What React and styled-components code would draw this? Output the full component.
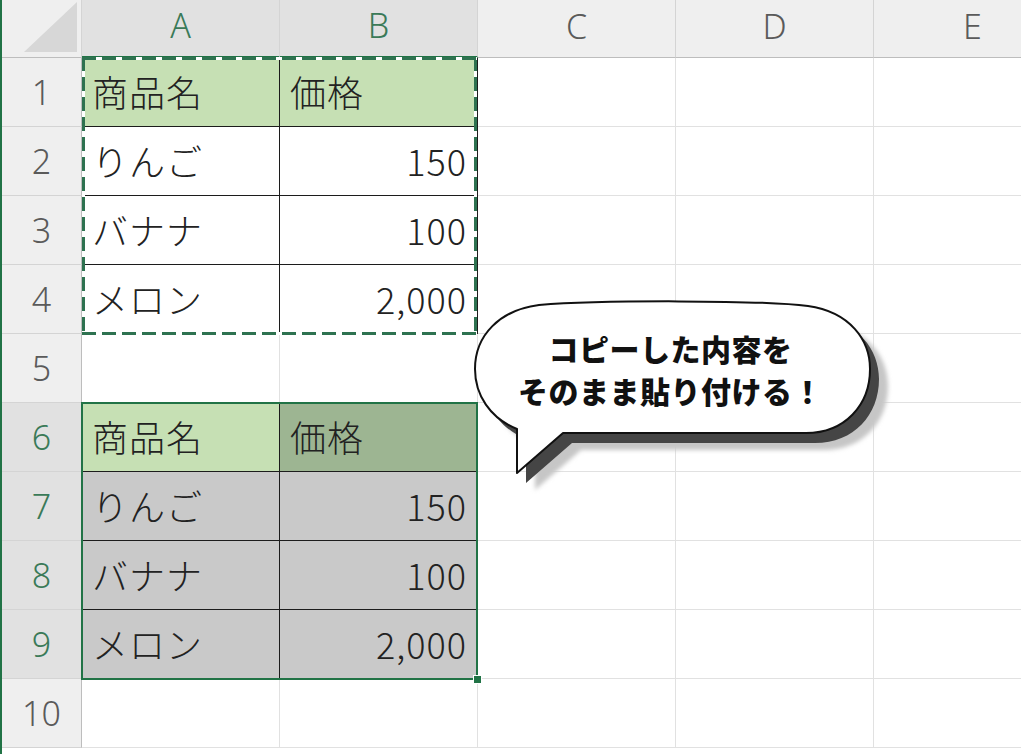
import React from 'react';
import styled, { createGlobalStyle } from 'styled-components';

const GREEN = '#217346';
const COL_W = 198;
const ROW_H = 69;

const GlobalStyle = createGlobalStyle`
  html, body {
    margin: 0;
    padding: 0;
    background: #fff;
    overflow: hidden;
  }
  body {
    font-family: "Noto Sans CJK JP", "Noto Sans", sans-serif;
  }
`;

const COLS = ['A', 'B', 'C', 'D', 'E'];
const ROWS = [1, 2, 3, 4, 5, 6, 7, 8, 9, 10];

const tables = [
  {
    start: 1,
    fills: [
      ['#c6e0b4', '#c6e0b4'],
      ['#fff', '#fff'],
      ['#fff', '#fff'],
      ['#fff', '#fff'],
    ],
  },
  {
    start: 6,
    fills: [
      ['#c6e0b4', '#9db592'],
      ['#c9c9c9', '#c9c9c9'],
      ['#c9c9c9', '#c9c9c9'],
      ['#c9c9c9', '#c9c9c9'],
    ],
  },
];

const rowsText = [
  ['商品名', '価格'],
  ['りんご', '150'],
  ['バナナ', '100'],
  ['メロン', '2,000'],
];

// build lookup of table cells: "row-col" -> cell
const cellMap = {};
tables.forEach(({ start, fills }) => {
  rowsText.forEach((pair, i) => {
    pair.forEach((text, c) => {
      cellMap[`${start + i}-${c}`] = {
        text,
        bg: fills[i][c],
        right: i > 0 && c === 1,
      };
    });
  });
});

const selectedRows = [6, 7, 8, 9];

const Sheet = styled.div`
  position: relative;
  box-sizing: border-box;
  width: 100vw;
  height: 100vh;
  overflow: hidden;
  display: grid;
  grid-template-columns: 80px repeat(5, ${COL_W}px);
  grid-template-rows: 58px repeat(10, ${ROW_H}px) 1fr;
  border-left: 2px solid ${GREEN};
`;

const Corner = styled.div`
  grid-row: 1;
  grid-column: 1;
  display: flex;
  justify-content: flex-end;
  align-items: flex-end;
  padding: 0 4px 5px 0;
  background: #efefef;
  border-right: 1px solid #d4d4d4;
  border-bottom: 1px solid #bdbdbd;
`;

const Triangle = styled.div`
  width: 53px;
  height: 50px;
  background: #d7d7d7;
  clip-path: polygon(100% 0, 100% 100%, 0 100%);
`;

const ColHeader = styled.div`
  grid-row: 1;
  grid-column: ${(p) => p.$col};
  display: flex;
  justify-content: center;
  align-items: center;
  padding-bottom: 6px;
  font-family: "Noto Sans", sans-serif;
  font-weight: 300;
  font-size: 34px;
  color: ${(p) => (p.$sel ? '#3a7a58' : '#5a5a5a')};
  background: ${(p) => (p.$sel ? '#e1e1e1' : '#efefef')};
  border-right: 1px solid #d4d4d4;
  border-bottom: ${(p) => (p.$sel ? `2px solid ${GREEN}` : '1px solid #bdbdbd')};
`;

const RowHeader = styled.div`
  grid-row: ${(p) => p.$row};
  grid-column: 1;
  display: flex;
  justify-content: center;
  align-items: center;
  font-family: "Noto Sans", sans-serif;
  font-weight: 300;
  font-size: 34px;
  color: ${(p) => (p.$sel ? '#3a7a58' : '#5a5a5a')};
  background: ${(p) => (p.$sel ? '#e1e1e1' : '#efefef')};
  border-bottom: 1px solid #d4d4d4;
  border-right: 1px solid #bdbdbd;
`;

const Cell = styled.div`
  grid-row: ${(p) => p.$row};
  grid-column: ${(p) => p.$col};
  display: flex;
  align-items: center;
  justify-content: ${(p) => (p.$right ? 'flex-end' : 'flex-start')};
  padding: 0 10px 3px 10px;
  font-size: 36px;
  font-weight: 300;
  letter-spacing: 1px;
  color: #222;
  background: ${(p) => p.$bg || '#fff'};
  border-right: 1px solid ${(p) => (p.$boxed ? '#1c1c1c' : '#e1e1e1')};
  border-bottom: 1px solid ${(p) => (p.$boxed ? '#1c1c1c' : '#e1e1e1')};
  white-space: nowrap;
  overflow: hidden;
`;

const dash = (dir) =>
  `repeating-linear-gradient(${dir}, #2e7250 0 14px, #fff 14px 20px)`;

const Marquee = styled.div`
  grid-row: 2 / 6;
  grid-column: 2 / 4;
  margin: -1px 1px -1px 0;
  z-index: 2;
  pointer-events: none;
  background:
    ${dash('90deg')} top / 100% 3px no-repeat,
    ${dash('90deg')} bottom / 100% 3px no-repeat,
    ${dash('180deg')} left / 3px 100% no-repeat,
    ${dash('180deg')} right / 3px 100% no-repeat;
`;

const Selection = styled.div`
  grid-row: 7 / 11;
  grid-column: 2 / 4;
  position: relative;
  margin: -1px 0 -1px -1px;
  z-index: 2;
  pointer-events: none;
  border: 2px solid ${GREEN};
`;

const FillHandle = styled.div`
  position: absolute;
  right: -6px;
  bottom: -6px;
  width: 7px;
  height: 7px;
  background: ${GREEN};
  border: 1px solid #fff;
`;

const BubbleArt = styled.svg`
  position: absolute;
  left: 458px;
  top: 290px;
  z-index: 3;
  overflow: visible;
`;

const Caption = styled.div`
  position: absolute;
  left: 471px;
  top: 305px;
  width: 395px;
  height: 128px;
  z-index: 4;
  display: flex;
  flex-direction: column;
  justify-content: center;
  align-items: center;
  font-family: "Noto Sans CJK JP", sans-serif;
  font-weight: 900;
  font-size: 30px;
  line-height: 42px;
  color: #111;
  letter-spacing: 0.5px;
`;

const BUBBLE =
  'M539 305 C600 300 760 300 808 306 C850 312 870 340 870 369 C870 405 845 433 806 433 H563 L517 473 L517 429 C490 418 475 395 475 369 C475 335 500 310 539 305 Z';

const Bubble = () => (
  <>
    <BubbleArt width="450" height="220" viewBox="460 290 450 220">
      <defs>
        <filter id="soft" x="-10%" y="-10%" width="120%" height="130%">
          <feGaussianBlur stdDeviation="2" />
        </filter>
      </defs>
      <path d={BUBBLE} transform="translate(18 17)" fill="#c6c6c6" filter="url(#soft)" />
      <path d={BUBBLE} transform="translate(9 10)" fill="#454545" />
      <path d={BUBBLE} fill="#fff" stroke="#111" strokeWidth="2" strokeLinejoin="round" />
    </BubbleArt>
    <Caption>
      <span>コピーした内容を</span>
      <span>そのまま貼り付ける！</span>
    </Caption>
  </>
);

export default function App() {
  return (
    <>
      <GlobalStyle />
      <Sheet>
        <Corner>
          <Triangle />
        </Corner>
        {COLS.map((c, i) => (
          <ColHeader key={c} $col={i + 2} $sel={i < 2}>
            {c}
          </ColHeader>
        ))}
        {ROWS.map((r) => (
          <React.Fragment key={r}>
            <RowHeader $row={r + 1} $sel={selectedRows.includes(r)}>
              {r}
            </RowHeader>
            {COLS.map((c, i) => {
              const cell = cellMap[`${r}-${i}`];
              return (
                <Cell
                  key={c}
                  $row={r + 1}
                  $col={i + 2}
                  $bg={cell?.bg}
                  $boxed={!!cell}
                  $right={cell?.right}
                >
                  {cell?.text}
                </Cell>
              );
            })}
          </React.Fragment>
        ))}
        <Marquee />
        <Selection>
          <FillHandle />
        </Selection>
        <Bubble />
      </Sheet>
    </>
  );
}
